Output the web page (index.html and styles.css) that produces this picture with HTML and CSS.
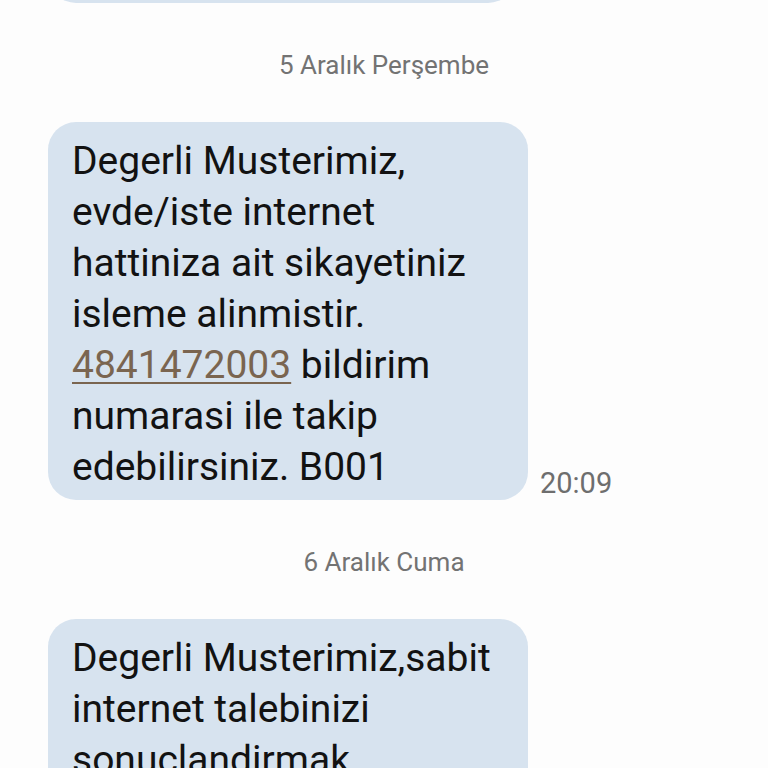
FILE: index.html
```html
<!DOCTYPE html>
<html lang="tr">
<head>
<meta charset="utf-8">
<title>Mesajlar</title>
<link rel="stylesheet" href="styles.css">
</head>
<body>
<div class="chat">
  <div class="msg msg-stub"><div class="bubble bubble-stub"></div></div>
  <div class="date">5 Aralık Perşembe</div>
  <div class="msg">
    <div class="bubble">Degerli Musterimiz,<br>evde/iste internet<br>hattiniza ait sikayetiniz<br>isleme alinmistir.<br><a class="link" href="#">4841472003</a> bildirim<br>numarasi ile takip<br>edebilirsiniz. B001</div>
    <span class="time">20:09</span>
  </div>
  <div class="date">6 Aralık Cuma</div>
  <div class="msg">
    <div class="bubble">Degerli Musterimiz,sabit<br>internet talebinizi<br>sonuclandirmak<br>icin sizinle iletisime<br>gececegiz.</div>
  </div>
</div>
</body>
</html>
```
FILE: styles.css
```css
html, body {
  margin: 0;
  padding: 0;
  background: #fdfdfd;
}
body {
  font-family: Roboto, "Noto Sans", sans-serif;
  color: #121212;
  overflow: hidden;
  height: 768px;
}
.chat {
  display: flex;
  flex-direction: column;
  padding: 0 0 0 48px;
}
.msg {
  display: flex;
  align-items: flex-end;
  gap: 12px;
}
.msg-stub {
  margin-top: -57px;
}
.bubble {
  width: 480px;
  box-sizing: border-box;
  background: #d7e3ef;
  border-radius: 28px;
  padding: 14px 24px 7px;
  font-size: 39px;
  line-height: 51px;
  white-space: nowrap;
}
.bubble-stub {
  width: 468px;
  height: 60px;
  padding: 0;
}
.link {
  color: #7a6550;
  text-decoration: underline;
  text-decoration-thickness: 2px;
  text-underline-offset: 4px;
}
.time {
  font-size: 29px;
  line-height: 33px;
  color: #6e6e6e;
}
.date {
  padding: 41px 48px 41px 0;
  text-align: center;
  font-size: 26px;
  line-height: 32px;
  color: #737373;
}
.msg + .date {
  padding-top: 46px;
}
```
